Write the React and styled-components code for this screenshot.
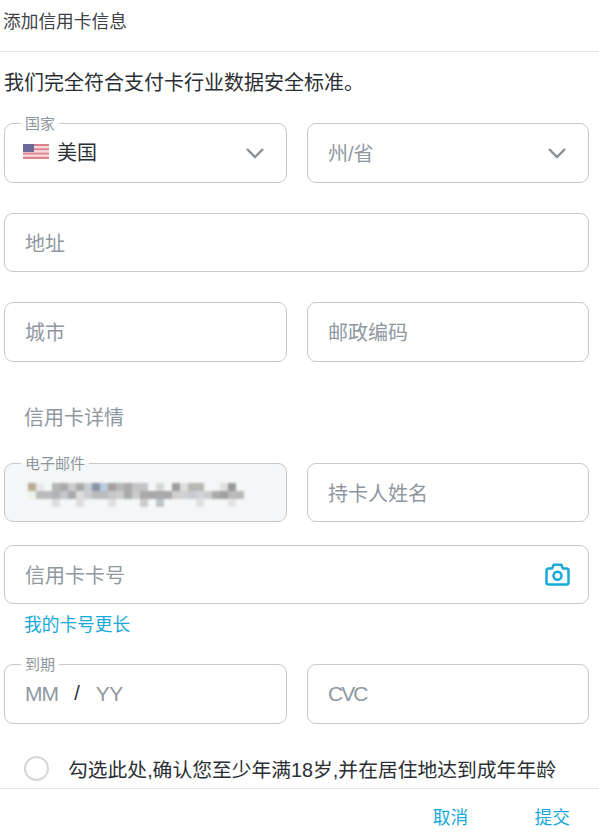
import React from "react";
import styled, { createGlobalStyle } from "styled-components";

const Global = createGlobalStyle`
  html, body { margin: 0; padding: 0; background: #fff; }
  body { font-family: "Liberation Sans", "Noto Sans CJK SC", sans-serif; overflow: hidden; }
`;

const Page = styled.div`
  width: 599px; height: 839px; display: flex; flex-direction: column; overflow: hidden; color: #2b2f33;
`;
const Header = styled.div`
  flex: none; height: 52px; box-sizing: border-box; border-bottom: 1px solid #e6e6e6;
  padding: 0 3px 12px; display: flex; align-items: center;
  font-size: 17.7px; color: #3d4145;
`;
const Notice = styled.p`
  flex: none; margin: 0; height: 71px; box-sizing: border-box; padding: 18px 4px 0;
  font-size: 20px; line-height: 26px;
`;
const Form = styled.div`
  flex: 1; min-height: 0; padding: 0 10px 0 4px; display: flex; flex-direction: column;
`;
const Row = styled.div`
  display: grid; grid-template-columns: 283px 282px; column-gap: 20px; margin-bottom: ${p => p.$gap ?? 30}px;
`;
const Field = styled.div`
  position: relative; height: 59.5px; box-sizing: border-box;
  border: 1px solid #c6c8ca; border-radius: 9px;
  background: ${p => (p.$filled ? "#f4f6f8" : "#fff")};
  display: flex; align-items: center; padding: 0 16px 0 20px;
  grid-column: ${p => (p.$full ? "1 / -1" : "auto")};
`;
const Legend = styled.span`
  position: absolute; left: 16px; top: -9px; padding: 0 4px;
  background: ${p => (p.$filled ? "linear-gradient(#fff 50%, #f4f6f8 50%)" : "#fff")};
  font-size: 15px; line-height: 17px; color: #8d969d;
`;
const Placeholder = styled.span`
  font-size: 20px; color: #8f989f; flex: 1;
`;
const LatinHint = styled.span`
  font-size: 21px; color: #8f989f; letter-spacing: ${p => p.$track}px; margin-top: 1px;
`;
const Value = styled.span`
  font-size: 20px; color: #2b2f33; flex: 1; margin-top: -3px;
`;
const Section = styled.div`
  font-size: 20px; color: #8f989f; padding-left: 20px; height: 30px; line-height: 30px; margin: 11px 0 30px;
`;
const Link = styled.a`
  display: block; font-size: 17.7px; line-height: 22px; color: #17a9d9; padding-left: 20px; margin: 10px 0 27.75px;
`;
const Flag = styled.svg`
  width: 26px; height: 15px; margin: -3px 8px 0 -2px; flex: none; filter: blur(0.35px); opacity: 0.9;
`;
const Chevron = styled.svg`
  width: 20px; height: 12px; flex: none; margin-right: 5px;
`;
const Camera = styled.svg`
  width: 25px; height: 23px; flex: none; margin-right: 2px;
`;
const Mosaic = styled.svg`
  display: block; margin: 6px 0 0 3px; width: 216px; height: 24px; filter: blur(0.8px);
`;
const Expiry = styled.div`
  display: flex; align-items: center; gap: 16px;
`;
const Slash = styled.span` font-size: 20px; color: #2b2f33; `;
const Consent = styled.div`
  display: flex; align-items: center; padding-left: 20px; margin-top: 0.5px; gap: 19px; font-size: 19.8px; white-space: nowrap; color: #2b2f33;
`;
const Radio = styled.span`
  width: 25px; height: 25px; border-radius: 50%; border: 2px solid #d4d6d8; box-sizing: border-box; flex: none;
`;
const Footer = styled.div`
  flex: none; height: 51px; border-top: 1px solid #e6e6e6; display: flex; justify-content: flex-end; align-items: center;
  gap: 66.5px; padding: 4px 29px 0 0; box-sizing: border-box; margin-top: auto;
`;
const Action = styled.button`
  border: 0; background: none; padding: 0; font: inherit; font-size: 17.7px; color: #17a9d9;
`;

const Down = () => (
  <Chevron viewBox="0 0 20 12"><path d="M2 2l8 8 8-8" fill="none" stroke="#8a8f94" strokeWidth="2.4" /></Chevron>
);

const mosaic = [
  [[0,"#b5ad98"],[1,"#e8e8e8"],[3,"#b5b5b5"],[4,"#aaaaaa"],[5,"#cccccc"],[6,"#aaaaaa"],[7,"#c8ced6"],[8,"#8a93a5"],[9,"#b8cce0"],[10,"#a8a0a0"],[11,"#b8b8b8"],[12,"#aaaaaa"],[13,"#c4c4c8"],[14,"#c4c4c8"],[16,"#d6d6d6"],[18,"#a09c9e"],[19,"#dedede"],[20,"#b8b8b4"],[21,"#b8b8b4"],[24,"#e0e0e0"],[25,"#999999"]],
  [[0,"#eef2e8"],[1,"#bbbbbb"],[2,"#bbbbbb"],[3,"#b0b4b8"],[4,"#c4c8cc"],[5,"#aaaaaa"],[6,"#dddddd"],[7,"#ccccd4"],[8,"#bbbbbb"],[9,"#b8bcc4"],[10,"#c8c8c8"],[11,"#cccccc"],[12,"#aaaaaa"],[13,"#cccccc"],[14,"#aaaaaa"],[15,"#a8a8a8"],[16,"#aaaaaa"],[17,"#a8a8a8"],[18,"#d0cfd0"],[19,"#d0d0d0"],[20,"#c8ccd0"],[21,"#d0d4d8"],[22,"#cccccc"],[23,"#aaaaaa"],[24,"#a0a0a0"],[25,"#bbbbbb"],[26,"#b8b8b8"]],
  [[3,"#dddddd"],[6,"#dddddd"],[10,"#e0e0e0"],[14,"#cccccc"],[16,"#bcc4c8"],[21,"#e0e0e0"],[25,"#e4e4e4"]],
];

export default function App() {
  return (
    <Page>
      <Global />
      <Header>添加信用卡信息</Header>
      <Notice>我们完全符合支付卡行业数据安全标准。</Notice>
      <Form>
        <Row>
          <Field>
            <Legend>国家</Legend>
            <Flag viewBox="0 0 26 15">
              {[0,1,2,3,4,5,6].map(i => (
                <rect key={i} y={i * 2.14} width="26" height="2.14" fill={i % 2 ? "#f3d5d8" : "#d9727f"} />
              ))}
              <rect width="11" height="8" fill="#5a5a8e" />
            </Flag>
            <Value>美国</Value>
            <Down />
          </Field>
          <Field><Placeholder>州/省</Placeholder><Down /></Field>
        </Row>
        <Row><Field $full><Placeholder>地址</Placeholder></Field></Row>
        <Row><Field><Placeholder>城市</Placeholder></Field><Field><Placeholder>邮政编码</Placeholder></Field></Row>
        <Section>信用卡详情</Section>
        <Row $gap={22.75}>
          <Field $filled>
            <Legend $filled>电子邮件</Legend>
            <Mosaic viewBox="0 0 216 24">
              {mosaic.map((row, y) => row.map(([x, color]) => (
                <rect key={x + "-" + y} x={x * 8} y={y * 8} width="8" height="8" fill={color} />
              )))}
            </Mosaic>
          </Field>
          <Field><Placeholder>持卡人姓名</Placeholder></Field>
        </Row>
        <Row $gap={0}>
          <Field $full>
            <Placeholder>信用卡卡号</Placeholder>
            <Camera viewBox="0 0 25 23" fill="none" stroke="#17a9d9" strokeWidth="2.5" strokeLinejoin="round">
              <path d="M1.5 7.5a2 2 0 0 1 2-2h3.6l1.6-3.8h7.6l1.6 3.8h3.6a2 2 0 0 1 2 2v12a2 2 0 0 1-2 2h-18a2 2 0 0 1-2-2z" />
              <circle cx="12.5" cy="12.8" r="4" />
            </Camera>
          </Field>
        </Row>
        <Link>我的卡号更长</Link>
        <Row>
          <Field>
            <Legend>到期</Legend>
            <Expiry><LatinHint $track={-0.9}>MM</LatinHint><Slash>/</Slash><LatinHint $track={-0.4}>YY</LatinHint></Expiry>
          </Field>
          <Field><LatinHint $track={-1.9}>CVC</LatinHint></Field>
        </Row>
        <Consent><Radio />勾选此处,确认您至少年满18岁,并在居住地达到成年年龄</Consent>
      </Form>
      <Footer><Action>取消</Action><Action>提交</Action></Footer>
    </Page>
  );
}
